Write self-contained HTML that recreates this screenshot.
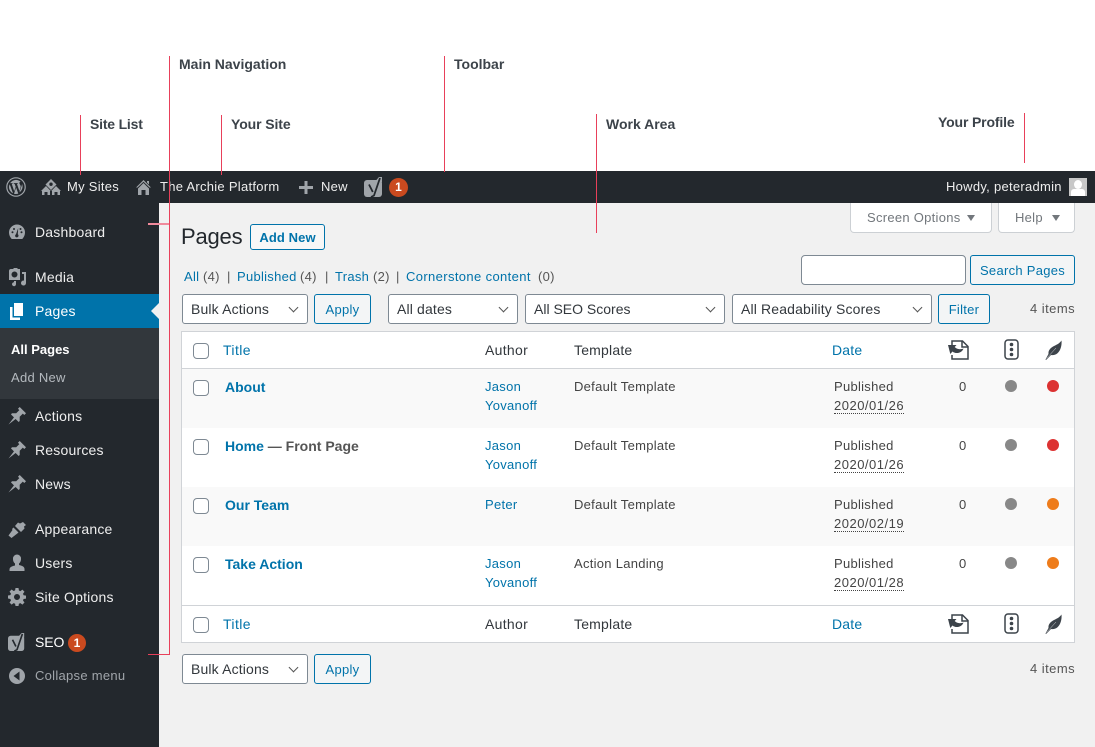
<!DOCTYPE html>
<html><head><meta charset="utf-8"><title>Pages</title>
<style>
html,body{margin:0;padding:0;background:#fff}
#p{position:relative;width:1095px;height:747px;overflow:hidden;background:#fff;font-family:"Liberation Sans",sans-serif;font-size:13px;color:#444;letter-spacing:.28px}
#p div,#p a,#p svg,#p span.t,#p span.x{position:absolute}
.t,.x{white-space:nowrap;line-height:18px}
.lb{font-weight:bold;font-size:14px;color:#3c434a;letter-spacing:0}
.w{color:#eee;font-size:13px}
.m{color:#eee;font-size:14px;letter-spacing:.2px}
.l{color:#0073aa}
.b{font-weight:bold;color:#0073aa;font-size:14px;letter-spacing:0}
.h{font-size:14px;letter-spacing:.2px}
.d{letter-spacing:.5px;border-bottom:1px dotted #444}
.s{background:#fff;border:1px solid #7e8993;border-radius:3px;box-sizing:border-box;height:30px;font-size:14px;color:#32373c;line-height:28px;padding-left:8px;letter-spacing:.15px}
.s:after{content:"";position:absolute;right:10px;top:9px;width:6px;height:6px;border-right:1.5px solid #555;border-bottom:1.5px solid #555;transform:rotate(45deg)}
.btn{border:1px solid #0073aa;border-radius:3px;background:#f3f5f6;box-sizing:border-box;height:30px;color:#0073aa;text-align:center;line-height:29px;font-size:13px}
.cb{width:16px;height:16px;box-sizing:border-box;border:1px solid #7e8993;border-radius:4px;background:#fff;left:193px}
.r{background:#e8405a}
.ic{fill:#a0a5aa}
.dot{width:12px;height:12px;border-radius:50%}
</style></head><body><div id="p">

<div style="left:0;top:171px;width:1095px;height:32px;background:#23282d"></div>
<div style="left:0;top:203px;width:159px;height:544px;background:#23282d"></div>
<div style="left:159px;top:203px;width:936px;height:544px;background:#f1f1f1"></div>

<span class="t lb" style="left:179px;top:55px">Main Navigation</span>
<span class="t lb" style="left:454px;top:55px">Toolbar</span>
<span class="t lb" style="left:90px;top:115px;letter-spacing:-.2px">Site List</span>
<span class="t lb" style="left:231px;top:115px;letter-spacing:-.1px">Your Site</span>
<span class="t lb" style="left:606px;top:115px">Work Area</span>
<span class="t lb" style="left:938px;top:113px;letter-spacing:-.15px">Your Profile</span>

<!-- toolbar -->
<svg style="left:6px;top:177px" width="20" height="20" viewBox="0 0 20 20"><circle cx="10" cy="10" r="9.2" fill="none" stroke="#a0a5aa" stroke-width="1.2"/><path class="ic" d="M3 10c0 2.800 1.600 5.200 4 6.300L3.700 7.200C3.200 8.300 3 9.100 3 10zM14.700 9.700c0-.9-.3-1.500-.6-2-.4-.6-.7-1.100-.7-1.700 0-.7.5-1.300 1.200-1.300h.1A7 7 0 0 0 4.100 6.100h.5c.7 0 1.900-.1 1.900-.1.400 0 .4.500 0 .6 0 0-.4 0-.8.100l2.500 7.500 1.500-4.500-1.100-3c-.4 0-.7-.1-.7-.1-.4 0-.3-.6 0-.6 0 0 1.200.1 1.900.1s1.900-.1 1.900-.1c.4 0 .4.500 0 .6 0 0-.4 0-.8.100l2.500 7.400.7-2.300c.3-.9.500-1.600.5-2.100zM10.100 10.600l-2.100 6.100a7 7 0 0 0 4.300-.1l-2.200-6zM16 6.700c0 .7-.1 1.500-.5 2.500l-2.100 6.100A7 7 0 0 0 16 6.700z"/></svg>
<svg style="left:41px;top:179px" width="20" height="16" viewBox="0 0 20 16"><path class="ic" fill-rule="evenodd" d="M10 0l5.500 5.500L10 11 4.500 5.500zM10 3.500a1.700 1.700 0 1 0 0 3.400 1.700 1.700 0 0 0 0-3.400zM5 7l4.800 5H9v4H1v-4H0zM15 7l5 5h-1v4h-8v-4h-.8zM3.500 13v3h3v-3zM13.500 13v3h3v-3z"/></svg>
<span class="t w" style="left:67px;top:178px">My Sites</span>
<svg style="left:136px;top:180px" width="15" height="15" viewBox="0 0 15 15"><path class="ic" d="M7.500 0L15 7.500h-1.500L7.500 1.800 1.500 7.500H0zM11 1h2v3.500l-2-2zM7.500 3L13 8.500V15H9.500V10h-4v5H2V8.500z"/></svg>
<span class="t w" style="left:160px;top:178px">The Archie Platform</span>
<svg style="left:299px;top:181px" width="14" height="13" viewBox="0 0 14 13"><path class="ic" d="M5.500 0h3v5H14v3H8.500v5h-3V8H0V5h5.500z"/></svg>
<span class="t w" style="left:321px;top:178px">New</span>
<svg style="left:364px;top:177px" width="20" height="21" viewBox="0 0 20 21"><rect x="0" y="3" width="18" height="17" rx="3" class="ic"/><path class="ic" d="M12 3.500L15 0h3v5h-4z"/><path d="M5 7.500l3.800 7.500M16 1l-6 17.500-3 1.500" fill="none" stroke="#23282d" stroke-width="1.800"/></svg>
<div style="left:389px;top:178px;width:19px;height:19px;border-radius:50%;background:#ca4a1f;color:#fff;font-size:12px;font-weight:bold;text-align:center;line-height:19px;letter-spacing:0">1</div>
<span class="t w" style="left:946px;top:178px">Howdy, peteradmin</span>
<div style="left:1069px;top:178px;width:18px;height:18px;background:#c8c8c8;overflow:hidden"><div style="left:5px;top:2px;width:8px;height:9px;border-radius:50%;background:#fff"></div><div style="left:2px;top:11px;width:14px;height:7px;border-radius:3px 3px 0 0;background:#fff"></div></div>

<!-- menu -->
<div style="left:0;top:294px;width:159px;height:34px;background:#0073aa"></div>
<div style="left:151px;top:303px;width:0;height:0;border:8px solid transparent;border-right-color:#f1f1f1;border-left:0"></div>
<div style="left:0;top:328px;width:159px;height:71px;background:#32373c"></div>

<svg style="left:8px;top:223px" width="18" height="18" viewBox="0 0 18 18"><path class="ic" fill-rule="evenodd" d="M9 1.500A8 8 0 0 0 1 9.500c0 2.500 1 4.500 2.700 6.500h10.600c1.700-2 2.700-4 2.700-6.500a8 8 0 0 0-8-8zM10.200 5l-.4 6.300a1.700 1.700 0 1 1-1.800-.1zM4.500 8.300a1 1 0 1 1 0 2 1 1 0 0 1 0-2zM13.500 8.300a1 1 0 1 1 0 2 1 1 0 0 1 0-2zM6 5a1 1 0 1 1 0 2 1 1 0 0 1 0-2zM12.500 5a1 1 0 1 1 0 2 1 1 0 0 1 0-2z"/></svg>
<span class="t m" style="left:35px;top:223px">Dashboard</span>
<svg style="left:8px;top:268px" width="19" height="19" viewBox="0 0 19 19"><path class="ic" fill-rule="evenodd" d="M3 1h2l1-1h3l1 1h2v11H1V3c0-1.200.8-2 2-2zM6.500 3.500a3 3 0 1 0 0 6 3 3 0 0 0 0-6zM14 4h4v11a2.500 2.500 0 1 1-2-2.400V6h-2zM6 13h2v3a2 2 0 1 1-2-1.800z"/></svg>
<span class="t m" style="left:35px;top:268px">Media</span>
<svg style="left:10px;top:303px" width="13" height="17" viewBox="0 0 13 17"><path fill="#fff" d="M4 0h9v13H4zM0 4h2.500v10.500H10V17H0z"/></svg>
<span class="t m" style="left:35px;top:302px;color:#fff">Pages</span>
<span class="t" style="left:11px;top:341px;color:#fff;font-weight:bold;letter-spacing:0">All Pages</span>
<span class="t" style="left:11px;top:369px;color:#b4b9be">Add New</span>

<svg style="left:8px;top:407px" width="18" height="18" viewBox="0 0 20 20"><g transform="translate(9.500 10.500) scale(1.1) rotate(45)"><path class="ic" d="M-4.500-9h9v2.500h-2V-2l3 3v1.500H1.200l-1.200 9-1.200-9h-4.300V1l3-3v-4.500h-2z"/></g></svg>
<span class="t m" style="left:35px;top:407px">Actions</span>
<svg style="left:8px;top:441px" width="18" height="18" viewBox="0 0 20 20"><g transform="translate(9.500 10.500) scale(1.1) rotate(45)"><path class="ic" d="M-4.500-9h9v2.500h-2V-2l3 3v1.500H1.200l-1.200 9-1.200-9h-4.300V1l3-3v-4.500h-2z"/></g></svg>
<span class="t m" style="left:35px;top:441px">Resources</span>
<svg style="left:8px;top:475px" width="18" height="18" viewBox="0 0 20 20"><g transform="translate(9.500 10.500) scale(1.1) rotate(45)"><path class="ic" d="M-4.500-9h9v2.500h-2V-2l3 3v1.500H1.200l-1.200 9-1.200-9h-4.300V1l3-3v-4.500h-2z"/></g></svg>
<span class="t m" style="left:35px;top:475px">News</span>
<svg style="left:8px;top:521px" width="18" height="17" viewBox="0 0 18 17"><path class="ic" d="M10 1.500l2 1 3-1.500 3 3-2 1.500.5 2-3.500 3.500-6-6zM5.500 6.500l5 5-1.500 1.200L3.500 17 .5 14.500l4-5.500-.5-1z"/></svg>
<span class="t m" style="left:35px;top:520px">Appearance</span>
<svg style="left:9px;top:554px" width="16" height="18" viewBox="0 0 16 18"><path class="ic" d="M8 .5a4 4 0 0 1 4 4.500c0 2-.9 3.800-2 4.500v1.500c2.500.5 5.500 1.600 5.500 4V17H.5v-1.500c0-2.400 3-3.500 5.500-4V9.500C4.900 8.800 4 7 4 5A4 4 0 0 1 8 .5z"/></svg>
<span class="t m" style="left:35px;top:554px">Users</span>
<svg style="left:8px;top:588px" width="18" height="18" viewBox="0 0 18 18"><path class="ic" fill-rule="evenodd" d="M7.500 0h3l.4 2.500 1.500.6 2-1.500 2.100 2.100-1.500 2 .6 1.500 2.400.4v3l-2.400.4-.6 1.500 1.500 2-2.100 2.100-2-1.500-1.500.6-.4 2.300h-3l-.4-2.300-1.500-.6-2 1.500-2.100-2.100 1.500-2-.6-1.500L0 10.500v-3l2.400-.4.6-1.500-1.500-2 2.100-2.100 2 1.500 1.500-.6zM9 6a3 3 0 1 0 0 6 3 3 0 0 0 0-6z"/></svg>
<span class="t m" style="left:35px;top:588px">Site Options</span>
<svg style="left:8px;top:632px" width="18" height="21" viewBox="0 0 20 21"><rect x="0" y="3" width="18" height="17" rx="3" class="ic"/><path class="ic" d="M12 3.500L15 0h3v5h-4z"/><path d="M5 7.500l3.800 7.500M16 1l-6 17.500-3 1.500" fill="none" stroke="#23282d" stroke-width="1.800"/></svg>
<span class="t m" style="left:35px;top:633px;letter-spacing:-.1px;color:#fff">SEO</span>
<div style="left:68px;top:634px;width:18px;height:18px;border-radius:50%;background:#ca4a1f;color:#fff;font-size:12px;font-weight:bold;text-align:center;line-height:18px;letter-spacing:0">1</div>
<svg style="left:9px;top:668px" width="16" height="16" viewBox="0 0 16 16"><circle cx="8" cy="8" r="8" fill="#a0a5aa"/><path d="M10.500 3.500v9L4.500 8z" fill="#23282d"/></svg>
<span class="t" style="left:35px;top:667px;color:#a0a5aa">Collapse menu</span>

<!-- screen meta -->
<div style="left:850px;top:203px;width:142px;height:30px;box-sizing:border-box;background:#fff;border:1px solid #ccd0d4;border-top:0;border-radius:0 0 4px 4px;color:#72777c;line-height:30px;padding-left:16px">Screen Options</div>
<div style="left:967px;top:215px;width:0;height:0;border:4px solid transparent;border-top:6px solid #72777c;border-left-width:4.500px;border-right-width:4.500px"></div>
<div style="left:998px;top:203px;width:77px;height:30px;box-sizing:border-box;background:#fff;border:1px solid #ccd0d4;border-top:0;border-radius:0 0 4px 4px;color:#72777c;line-height:30px;padding-left:16px">Help</div>
<div style="left:1052px;top:215px;width:0;height:0;border:4px solid transparent;border-top:6px solid #72777c;border-left-width:4.500px;border-right-width:4.500px"></div>

<!-- head -->
<span class="t" style="left:181px;top:223px;font-size:22px;line-height:28px;color:#23282d;letter-spacing:-.2px">Pages</span>
<div style="left:250px;top:224px;width:75px;height:26px;box-sizing:border-box;border:1px solid #0073aa;border-radius:3px;background:#f7f7f7;color:#0073aa;font-weight:bold;text-align:center;line-height:25px;letter-spacing:.1px">Add New</div>

<span class="t l" style="left:184px;top:268px">All</span><span class="t" style="left:203px;top:268px;color:#555">(4)</span><span class="t" style="left:227px;top:268px;color:#555">|</span>
<span class="t l" style="left:237px;top:268px">Published</span><span class="t" style="left:300px;top:268px;color:#555">(4)</span><span class="t" style="left:325px;top:268px;color:#555">|</span>
<span class="t l" style="left:335px;top:268px">Trash</span><span class="t" style="left:373px;top:268px;color:#555">(2)</span><span class="t" style="left:396px;top:268px;color:#555">|</span>
<span class="t l" style="left:406px;top:268px;letter-spacing:.37px">Cornerstone content</span><span class="t" style="left:538px;top:268px;color:#555">(0)</span>

<div style="left:801px;top:255px;width:165px;height:30px;box-sizing:border-box;border:1px solid #7e8993;border-radius:4px;background:#fff"></div>
<div class="btn" style="left:970px;top:255px;width:105px">Search Pages</div>

<div class="s" style="left:182px;top:294px;width:126px">Bulk Actions</div>
<div class="btn" style="left:314px;top:294px;width:57px">Apply</div>
<div class="s" style="left:388px;top:294px;width:130px">All dates</div>
<div class="s" style="left:525px;top:294px;width:200px;letter-spacing:0">All SEO Scores</div>
<div class="s" style="left:732px;top:294px;width:200px">All Readability Scores</div>
<div class="btn" style="left:938px;top:294px;width:52px">Filter</div>
<span class="t" style="left:1030px;top:300px;color:#555;letter-spacing:.45px">4 items</span>

<!-- table -->
<div style="left:181px;top:331px;width:894px;height:312px;box-sizing:border-box;border:1px solid #d0d3d7;background:#fff"></div>
<div style="left:182px;top:368px;width:892px;height:1px;background:#d0d3d7"></div>
<div style="left:182px;top:369px;width:892px;height:59px;background:#f9f9f9"></div>
<div style="left:182px;top:487px;width:892px;height:59px;background:#f9f9f9"></div>
<div style="left:182px;top:605px;width:892px;height:1px;background:#d0d3d7"></div>

<div class="cb" style="top:343px"></div>
<span class="t l h" style="left:223px;top:341px;letter-spacing:.4px">Title</span>
<span class="t h" style="left:485px;top:341px;color:#32373c;letter-spacing:.3px">Author</span>
<span class="t h" style="left:574px;top:341px;color:#32373c">Template</span>
<span class="t l h" style="left:832px;top:341px">Date</span>

<svg style="left:948px;top:340px" width="21" height="20" viewBox="0 0 21 20"><path d="M4 5V1h10.500l5.500 5.500V19H4v-4" fill="none" stroke="#3c434a" stroke-width="1.500"/><path d="M14 1v6h6" fill="none" stroke="#3c434a" stroke-width="1.500"/><path fill="#3c434a" d="M0 5h8.500L6.700 7c1.800 2 5 3 8.800 1.500C14 13 8 14.500 4.500 11.500L2.300 14z"/></svg>
<svg style="left:1004px;top:339px" width="15" height="21" viewBox="0 0 15 21"><rect x="1" y="1" width="13" height="19" rx="3" fill="none" stroke="#3c434a" stroke-width="1.500"/><circle cx="7.500" cy="5.500" r="1.800" fill="#3c434a"/><circle cx="7.500" cy="10.500" r="1.800" fill="#3c434a"/><circle cx="7.500" cy="15.500" r="1.800" fill="#3c434a"/></svg>
<svg style="left:1045px;top:340px" width="17" height="20" viewBox="0 0 17 20"><path fill="#3c434a" d="M16.500.5c.5 5-1 10-4 12.800-2 1.700-4 2-6.500 1.700L1 20l-.5-.5 3-5.500C3 10 6 7.500 9 6c3-1.500 5.500-2.500 7.500-5.500z"/><path d="M1.500 18.500L11 8" stroke="#fff" stroke-width=".4"/></svg>

<div class="cb" style="top:380px"></div>
<span class="t b" style="left:225px;top:378px">About</span>
<span class="t l" style="left:485px;top:377px;line-height:19px">Jason<br>Yovanoff</span>
<span class="t" style="left:574px;top:378px">Default Template</span>
<span class="t" style="left:834px;top:377px;line-height:19px">Published<br><span class="d">2020/01/26</span></span>
<span class="t" style="left:959px;top:378px">0</span>
<div class="dot" style="left:1005px;top:380px;background:#888"></div>
<div class="dot" style="left:1047px;top:380px;background:#dc3232"></div>

<div class="cb" style="top:439px"></div>
<span class="t b" style="left:225px;top:437px">Home<span style="color:#555"> — Front Page</span></span>
<span class="t l" style="left:485px;top:436px;line-height:19px">Jason<br>Yovanoff</span>
<span class="t" style="left:574px;top:437px">Default Template</span>
<span class="t" style="left:834px;top:436px;line-height:19px">Published<br><span class="d">2020/01/26</span></span>
<span class="t" style="left:959px;top:437px">0</span>
<div class="dot" style="left:1005px;top:439px;background:#888"></div>
<div class="dot" style="left:1047px;top:439px;background:#dc3232"></div>

<div class="cb" style="top:498px"></div>
<span class="t b" style="left:225px;top:496px">Our Team</span>
<span class="t l" style="left:485px;top:495px;line-height:19px">Peter</span>
<span class="t" style="left:574px;top:496px">Default Template</span>
<span class="t" style="left:834px;top:495px;line-height:19px">Published<br><span class="d">2020/02/19</span></span>
<span class="t" style="left:959px;top:496px">0</span>
<div class="dot" style="left:1005px;top:498px;background:#888"></div>
<div class="dot" style="left:1047px;top:498px;background:#ee7c1b"></div>

<div class="cb" style="top:557px"></div>
<span class="t b" style="left:225px;top:555px">Take Action</span>
<span class="t l" style="left:485px;top:554px;line-height:19px">Jason<br>Yovanoff</span>
<span class="t" style="left:574px;top:555px">Action Landing</span>
<span class="t" style="left:834px;top:554px;line-height:19px">Published<br><span class="d">2020/01/28</span></span>
<span class="t" style="left:959px;top:555px">0</span>
<div class="dot" style="left:1005px;top:557px;background:#888"></div>
<div class="dot" style="left:1047px;top:557px;background:#ee7c1b"></div>

<div class="cb" style="top:617px"></div>
<span class="t l h" style="left:223px;top:615px;letter-spacing:.4px">Title</span>
<span class="t h" style="left:485px;top:615px;color:#32373c;letter-spacing:.3px">Author</span>
<span class="t h" style="left:574px;top:615px;color:#32373c">Template</span>
<span class="t l h" style="left:832px;top:615px">Date</span>
<svg style="left:948px;top:614px" width="21" height="20" viewBox="0 0 21 20"><path d="M4 5V1h10.500l5.500 5.500V19H4v-4" fill="none" stroke="#3c434a" stroke-width="1.500"/><path d="M14 1v6h6" fill="none" stroke="#3c434a" stroke-width="1.500"/><path fill="#3c434a" d="M0 5h8.500L6.700 7c1.800 2 5 3 8.800 1.500C14 13 8 14.500 4.500 11.500L2.300 14z"/></svg>
<svg style="left:1004px;top:613px" width="15" height="21" viewBox="0 0 15 21"><rect x="1" y="1" width="13" height="19" rx="3" fill="none" stroke="#3c434a" stroke-width="1.500"/><circle cx="7.500" cy="5.500" r="1.800" fill="#3c434a"/><circle cx="7.500" cy="10.500" r="1.800" fill="#3c434a"/><circle cx="7.500" cy="15.500" r="1.800" fill="#3c434a"/></svg>
<svg style="left:1045px;top:614px" width="17" height="20" viewBox="0 0 17 20"><path fill="#3c434a" d="M16.500.5c.5 5-1 10-4 12.800-2 1.700-4 2-6.500 1.700L1 20l-.5-.5 3-5.500C3 10 6 7.500 9 6c3-1.500 5.500-2.500 7.500-5.500z"/><path d="M1.500 18.500L11 8" stroke="#fff" stroke-width=".4"/></svg>

<div class="s" style="left:182px;top:654px;width:126px">Bulk Actions</div>
<div class="btn" style="left:314px;top:654px;width:57px">Apply</div>
<span class="t" style="left:1030px;top:660px;color:#555;letter-spacing:.45px">4 items</span>

<!-- red annotation lines -->
<div class="r" style="left:80px;top:115px;width:1px;height:60px"></div>
<div class="r" style="left:169px;top:56px;width:1px;height:599px"></div>
<div class="r" style="left:148px;top:223px;width:21px;height:2px;background:#f08a9b"></div>
<div class="r" style="left:148px;top:654px;width:21px;height:1px"></div>
<div class="r" style="left:221px;top:115px;width:1px;height:60px"></div>
<div class="r" style="left:444px;top:56px;width:1px;height:116px"></div>
<div class="r" style="left:596px;top:114px;width:1px;height:119px"></div>
<div class="r" style="left:1024px;top:113px;width:1px;height:50px"></div>
</div></body></html>
